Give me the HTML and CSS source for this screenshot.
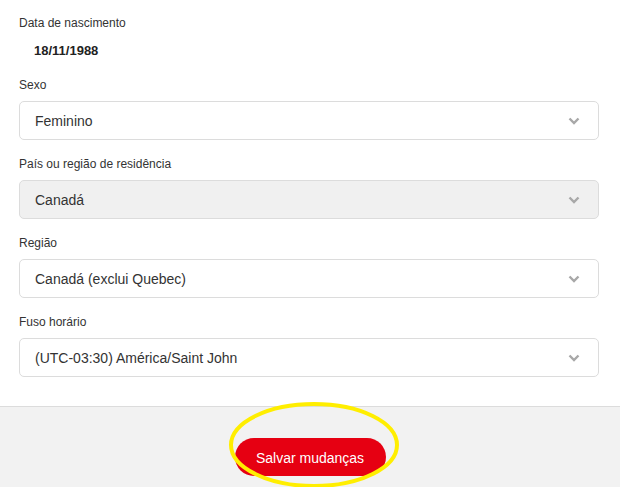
FILE: index.html
```html
<!DOCTYPE html>
<html lang="pt">
<head>
<meta charset="utf-8">
<link rel="stylesheet" href="styles.css">
</head>
<body>
<div class="page">
  <div class="form">
    <div class="field first">
      <div class="label">Data de nascimento</div>
      <div class="value">18/11/1988</div>
    </div>
    <div class="field">
      <div class="label">Sexo</div>
      <div class="select"><span>Feminino</span><svg class="chev" width="12" height="8" viewBox="0 0 12 8"><path d="M1.5 1.5 L6 6 L10.5 1.5" fill="none" stroke="#a8a8a8" stroke-width="2.4"/></svg></div>
    </div>
    <div class="field">
      <div class="label">País ou região de residência</div>
      <div class="select disabled"><span>Canadá</span><svg class="chev" width="12" height="8" viewBox="0 0 12 8"><path d="M1.5 1.5 L6 6 L10.5 1.5" fill="none" stroke="#a8a8a8" stroke-width="2.4"/></svg></div>
    </div>
    <div class="field">
      <div class="label">Região</div>
      <div class="select"><span>Canadá (exclui Quebec)</span><svg class="chev" width="12" height="8" viewBox="0 0 12 8"><path d="M1.5 1.5 L6 6 L10.5 1.5" fill="none" stroke="#a8a8a8" stroke-width="2.4"/></svg></div>
    </div>
    <div class="field">
      <div class="label">Fuso horário</div>
      <div class="select"><span>(UTC-03:30) América/Saint John</span><svg class="chev" width="12" height="8" viewBox="0 0 12 8"><path d="M1.5 1.5 L6 6 L10.5 1.5" fill="none" stroke="#a8a8a8" stroke-width="2.4"/></svg></div>
    </div>
  </div>
  <div class="footer">
    <button class="save">Salvar mudanças</button>
    <svg class="highlight" width="176" height="92" viewBox="0 0 176 92"><ellipse cx="88" cy="46" rx="83" ry="41" fill="none" stroke="#ffee00" stroke-width="4"/></svg>
  </div>
</div>
</body>
</html>
```

FILE: styles.css
```css
html, body {
  margin: 0;
  padding: 0;
  background: #fff;
}
body {
  font-family: "Liberation Sans", Arial, sans-serif;
  color: #333;
}
.page {
  width: 620px;
  height: 487px;
  display: flex;
  flex-direction: column;
  overflow: hidden;
}
.form {
  padding: 15px 21px 0 19px;
  height: 406px;
  flex: none;
  box-sizing: border-box;
}
.field {
  margin-bottom: 16px;
}
.field.first {
  margin-bottom: 17px;
}
.label {
  font-size: 12px;
  line-height: 16px;
  color: #333;
  margin-bottom: 8px;
}
.value {
  font-size: 13px;
  font-weight: bold;
  line-height: 18px;
  padding-top: 3px;
  padding-left: 15px;
  color: #222;
}
.select {
  height: 39px;
  box-sizing: border-box;
  border: 1.5px solid #dcdcdc;
  border-radius: 5px;
  background: #fff;
  display: flex;
  align-items: center;
  justify-content: space-between;
  padding: 0 18px 0 15px;
  font-size: 14px;
  color: #333;
}
.select.disabled {
  background: #f0f0f0;
}
.footer {
  position: relative;
  flex: 1;
  background: #f2f2f2;
  border-top: 1px solid #dcdcdc;
  display: flex;
  justify-content: center;
  align-items: flex-start;
  padding-top: 31px;
  box-sizing: border-box;
}
.save {
  width: 151px;
  height: 38px;
  border: none;
  border-radius: 19px;
  background: #e60012;
  color: #fff;
  font-family: "Liberation Sans", Arial, sans-serif;
  font-size: 14px;
  padding: 0;
  padding-top: 1px;
}
.highlight {
  position: absolute;
  left: 226px;
  top: -8px;
}
```
